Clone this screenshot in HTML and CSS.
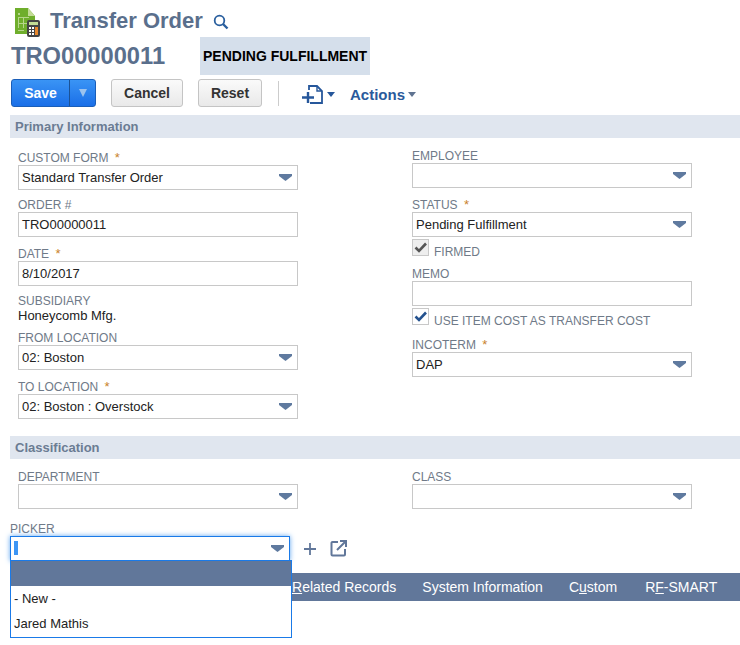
FILE: index.html
```html
<!DOCTYPE html>
<html>

<head>
    <meta charset="utf-8" />
    <meta name="viewport" content="width=device-width, initial-scale=1.0">
    <title>Transfer Order</title>
    <link rel="stylesheet" href="styles.css">
</head>

<body>
    <div class="title-row">
        <svg class="page-icon" width="26" height="29" viewBox="0 0 26 29">
            <path d="M1 0h13l7 8v18H1z" fill="#6fae2c" />
            <path d="M14 0l7 8h-7z" fill="#c3dc96" />
            <path d="M4 5h2v2H4zM4 9h11v1H4zM4 10h1v10H4zM9 10h1v10H9zM4 15h12v1H4zM4 22h6v1H4z" fill="#b5d68a" />
            <rect x="13" y="12" width="13" height="17" rx="2" fill="#454545" />
            <rect x="15" y="14" width="9" height="3" fill="#c3dc96" />
            <path d="M15 19h2v2h-2zM18 19h2v2h-2zM15 22h2v2h-2zM18 22h2v2h-2zM15 25h2v2h-2zM18 25h2v2h-2z" fill="#fff" />
            <rect x="21" y="19" width="3" height="8" fill="#e8872b" />
        </svg>
        <span class="page-title">Transfer Order</span>
        <svg class="search-icon" width="16" height="16" viewBox="0 0 16 16">
            <circle cx="6.5" cy="6.5" r="4.8" fill="none" stroke="#2a5f9e" stroke-width="1.8" />
            <path d="M10 10l4.5 4.5" stroke="#2a5f9e" stroke-width="2.4" />
        </svg>
    </div>

    <div class="record-row">
        <span class="record-id">TRO00000011</span>
        <span class="status-badge">PENDING FULFILLMENT</span>
    </div>

    <div class="toolbar">
        <div class="btn-save">
            <span class="save-label">Save</span>
            <span class="save-arrow"><i></i></span>
        </div>
        <button class="btn btn-cancel">Cancel</button>
        <button class="btn btn-reset">Reset</button>
        <span class="toolbar-sep"></span>
        <svg class="new-icon" width="21" height="19" viewBox="0 0 21 19">
            <path d="M7 5V1h8l5 5v12H8" fill="none" stroke="#26579b" stroke-width="1.8" />
            <path d="M15 1v5h5" fill="none" stroke="#26579b" stroke-width="1.4" />
            <path d="M0 12.5h12M6 7v11" stroke="#26579b" stroke-width="2.4" />
        </svg>
        <i class="menu-caret new-caret"></i>
        <span class="actions">Actions</span>
        <i class="menu-caret grey-caret"></i>
    </div>

    <div class="section-bar">Primary Information</div>

    <div class="columns">
        <div class="col col-left">
            <div class="field">
                <div class="label">Custom Form <span class="req">*</span></div>
                <div class="box">Standard Transfer Order<i class="arrow"></i></div>
            </div>
            <div class="field gap-6">
                <div class="label">Order #</div>
                <div class="box">TRO00000011</div>
            </div>
            <div class="field">
                <div class="label">Date <span class="req">*</span></div>
                <div class="box">8/10/2017</div>
            </div>
            <div class="field gap-7">
                <div class="label label-short">Subsidiary</div>
                <div class="value">Honeycomb Mfg.</div>
            </div>
            <div class="field">
                <div class="label">From Location</div>
                <div class="box">02: Boston<i class="arrow"></i></div>
            </div>
            <div class="field">
                <div class="label">To Location <span class="req">*</span></div>
                <div class="box">02: Boston : Overstock<i class="arrow"></i></div>
            </div>
        </div>

        <div class="col col-right">
            <div class="field first-right">
                <div class="label">Employee</div>
                <div class="box"><i class="arrow"></i></div>
            </div>
            <div class="field">
                <div class="label">Status <span class="req">*</span></div>
                <div class="box">Pending Fulfillment<i class="arrow"></i></div>
            </div>
            <div class="check-row">
                <span class="check check-off">
                    <svg width="13" height="11" viewBox="0 0 13 11"><path d="M1.5 5.5l3.5 3.5 7-7.5" fill="none" stroke="#555" stroke-width="2.6" /></svg>
                </span>
                <span class="check-label">Firmed</span>
            </div>
            <div class="field gap-7">
                <div class="label">Memo</div>
                <div class="box"></div>
            </div>
            <div class="check-row">
                <span class="check">
                    <svg width="13" height="11" viewBox="0 0 13 11"><path d="M1.5 5.5l3.5 3.5 7-7.5" fill="none" stroke="#24528f" stroke-width="2.6" /></svg>
                </span>
                <span class="check-label">Use Item Cost as Transfer Cost</span>
            </div>
            <div class="field gap-9">
                <div class="label">Incoterm <span class="req">*</span></div>
                <div class="box">DAP<i class="arrow"></i></div>
            </div>
        </div>
    </div>

    <div class="section-bar section-class">Classification</div>

    <div class="columns">
        <div class="col col-left">
            <div class="field">
                <div class="label">Department</div>
                <div class="box"><i class="arrow"></i></div>
            </div>
        </div>
        <div class="col col-right">
            <div class="field">
                <div class="label">Class</div>
                <div class="box"><i class="arrow"></i></div>
            </div>
        </div>
    </div>

    <div class="picker">
        <div class="label">Picker</div>
        <div class="picker-row">
            <div class="box box-focus"><span class="caret-bar"></span><i class="arrow"></i></div>
            <svg class="plus-icon" width="12" height="12" viewBox="0 0 12 12">
                <path d="M0 6h12M6 0v12" stroke="#61779a" stroke-width="1.8" />
            </svg>
            <svg class="open-icon" width="17" height="17" viewBox="0 0 17 17">
                <path d="M8 2H2.5a1 1 0 0 0-1 1v11.5a1 1 0 0 0 1 1H14a1 1 0 0 0 1-1V9" fill="none" stroke="#61779a" stroke-width="2" />
                <path d="M10 1h6v6M15.5 1.5L7 10" fill="none" stroke="#61779a" stroke-width="2" />
            </svg>
        </div>
        <div class="picker-menu">
            <div class="menu-blank"></div>
            <div class="menu-item">- New -</div>
            <div class="menu-item">Jared Mathis</div>
        </div>
    </div>

    <div class="tabs">
        <span class="tab"><u>R</u>elated Records</span>
        <span class="tab">System Information</span>
        <span class="tab tab-custom">C<u>u</u>stom</span>
        <span class="tab">R<u>F</u>-SMART</span>
    </div>
</body>

</html>
```

FILE: styles.css
```css
html,
body {
    margin: 0;
    padding: 0;
}

body {
    background-color: #fff;
    font-family: "Liberation Sans", Arial, sans-serif;
    font-size: 14px;
    color: #222;
    height: 645px;
    overflow: hidden;
}

/* Title */
.title-row {
    display: flex;
    align-items: flex-start;
    height: 37px;
    padding: 8px 0 0 14px;
    box-sizing: border-box;
}

.page-title {
    margin-left: 10px;
    font-size: 22px;
    line-height: 26px;
    font-weight: bold;
    color: #5a6f8c;
}

.search-icon {
    margin: 6px 0 0 10px;
}

.record-row {
    display: flex;
    height: 38px;
    align-items: center;
    padding-left: 11px;
}

.record-id {
    width: 189px;
    font-size: 23.7px;
    font-weight: bold;
    color: #5a6f8c;
}

.status-badge {
    display: flex;
    align-items: center;
    width: 170px;
    height: 38px;
    padding-left: 3px;
    box-sizing: border-box;
    background-color: #d5dfeb;
    color: #000;
    font-size: 14px;
    font-weight: bold;
    white-space: nowrap;
}

/* Toolbar */
.toolbar {
    display: flex;
    align-items: center;
    height: 28px;
    margin-top: 4px;
    padding-left: 11px;
}

.btn-save {
    display: flex;
    width: 85px;
    height: 28px;
    box-sizing: border-box;
    border: 1px solid #1a5eb8;
    border-radius: 3px;
    background: linear-gradient(#3a94f5, #1a6fe8);
    color: #fff;
    font-size: 14px;
    font-weight: bold;
}

.save-label {
    width: 57px;
    line-height: 26px;
    text-align: center;
    border-right: 1px solid #1b5296;
}

.save-arrow {
    flex: 1;
    display: flex;
    align-items: center;
    justify-content: center;
}

.save-arrow i {
    border-top: 8px solid #9cc3ee;
    border-left: 4px solid transparent;
    border-right: 4px solid transparent;
}

.btn {
    height: 28px;
    padding: 0;
    border: 1px solid #c4c4c4;
    border-radius: 3px;
    background: linear-gradient(#fafafa, #e9e9e9);
    color: #333;
    font-family: inherit;
    font-size: 14px;
    font-weight: bold;
}

.btn-cancel {
    width: 72px;
    margin-left: 15px;
}

.btn-reset {
    width: 64px;
    margin-left: 15px;
}

.toolbar-sep {
    width: 1px;
    height: 25px;
    margin-left: 16px;
    background-color: #ccc;
}

.new-icon {
    margin: 2px 0 0 23px;
}

.menu-caret {
    border-top: 5px solid #26579b;
    border-left: 4px solid transparent;
    border-right: 4px solid transparent;
}

.new-caret {
    margin: 2px 0 0 4px;
}

.grey-caret {
    margin: 2px 0 0 3px;
    border-top-color: #5f7391;
}

.actions {
    margin: 2px 0 0 15px;
    font-size: 15px;
    font-weight: bold;
    color: #2a5a9c;
}

/* Sections */
.section-bar {
    height: 23px;
    margin: 8px 0 0 10px;
    padding-left: 5px;
    background-color: #e0e6ef;
    color: #6b7c93;
    font-size: 13px;
    font-weight: bold;
    line-height: 23px;
}

.section-class {
    margin-top: 17px;
}

.columns {
    display: flex;
    padding-left: 18px;
}

.col {
    width: 280px;
}

.col-right {
    margin-left: 114px;
}

.col-left .field:first-child {
    margin-top: 11px;
}

.col-right .first-right {
    margin-top: 9px;
}

.section-class + .columns .field {
    margin-top: 9px;
}

.field {
    margin-top: 8px;
}

.field.gap-6 {
    margin-top: 6px;
}

.field.gap-7 {
    margin-top: 7px;
}

.field.gap-9 {
    margin-top: 9px;
}

.label {
    height: 16px;
    color: #6f7a88;
    font-size: 12px;
    line-height: 18px;
    text-transform: uppercase;
}

.label-short {
    height: 15px;
    line-height: 16px;
}

.req {
    margin-left: 3px;
    color: #c9822b;
    font-size: 13px;
}

.value {
    height: 13px;
    font-size: 13px;
    line-height: 15px;
}

.box {
    position: relative;
    height: 25px;
    box-sizing: border-box;
    padding-left: 3px;
    border: 1px solid #c8c8c8;
    font-size: 13px;
    line-height: 23px;
}

.arrow {
    position: absolute;
    top: 8px;
    right: 5px;
    width: 13px;
    height: 7px;
    background-color: #5f7a9f;
    clip-path: polygon(0 0, 100% 0, 100% 30%, 50% 100%, 0 30%);
}

/* Checkboxes */
.check-row {
    display: flex;
    height: 19px;
    margin-top: 2px;
}

.check {
    display: flex;
    align-items: center;
    justify-content: center;
    width: 17px;
    height: 17px;
    box-sizing: border-box;
    border: 1px solid #c8c8c8;
}

.check-off {
    background-color: #eee;
}

.check-label {
    margin: 5px 0 0 5px;
    color: #6f7a88;
    font-size: 12px;
    line-height: 16px;
    text-transform: uppercase;
}

/* Picker */
.picker {
    position: relative;
    margin: 11px 0 0 10px;
}

.picker-row {
    display: flex;
    align-items: center;
}

.picker-row .box {
    width: 280px;
}

.box-focus {
    border-color: #1a7ae8;
    box-shadow: 0 0 5px #5fa6f0;
}

.box-focus .arrow {
    right: 5px;
}

.caret-bar {
    display: block;
    width: 4px;
    height: 14px;
    margin-top: 4px;
    background-color: #3d96f5;
}

.plus-icon {
    margin-left: 14px;
}

.open-icon {
    margin-left: 14px;
}

.picker-menu {
    position: absolute;
    top: 40px;
    left: 0;
    width: 282px;
    height: 78px;
    box-sizing: border-box;
    border: 1px solid #1a7ae8;
    background-color: #fff;
    z-index: 2;
}

.menu-blank {
    height: 25px;
    background-color: #61779a;
}

.menu-item {
    height: 25px;
    padding-left: 3px;
    font-size: 13px;
    line-height: 25px;
}

/* Tabs */
.tabs {
    display: flex;
    height: 28px;
    margin: 12px 0 0 10px;
    padding-left: 282px;
    background-color: #61779a;
    color: #fff;
    font-size: 14px;
    line-height: 28px;
    white-space: nowrap;
}

.tab {
    margin-right: 26px;
}

.tab-custom {
    margin-right: 28px;
}
```
